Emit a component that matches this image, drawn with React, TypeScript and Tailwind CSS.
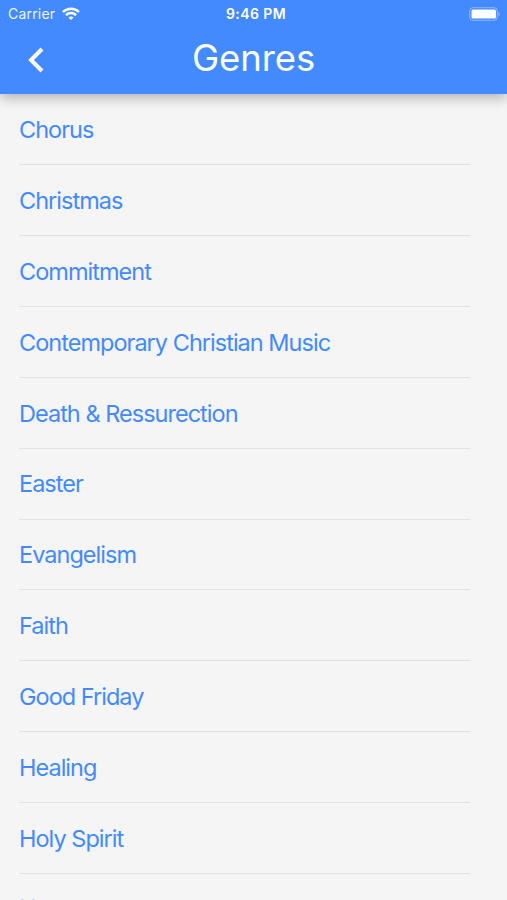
const genres = [
  'Chorus',
  'Christmas',
  'Commitment',
  'Contemporary Christian Music',
  'Death & Ressurection',
  'Easter',
  'Evangelism',
  'Faith',
  'Good Friday',
  'Healing',
  'Holy Spirit',
  'Hope',
];

function WifiIcon() {
  return (
    <svg width="18" height="13" viewBox="0 0 18 13" fill="none" stroke="currentColor" strokeWidth="2.4">
      <path d="M1 5C5.5 0.6 12.5 0.6 17 5" />
      <path d="M3.9 8.1C6.8 5.3 11.2 5.3 14.1 8.1" />
      <path d="M9 13L6.4 10.4C8 9.2 10 9.2 11.6 10.4Z" fill="currentColor" stroke="none" />
    </svg>
  );
}

function BatteryIcon() {
  return (
    <svg width="31" height="14" viewBox="0 0 31 14" fill="none">
      <rect x="0.7" y="0.7" width="27.6" height="12.6" rx="3.3" stroke="white" strokeOpacity="0.4" />
      <rect x="2.5" y="2.5" width="24.5" height="9" rx="1.5" fill="white" />
      <path d="M29.5 5C31 5.7 31 8.3 29.5 9Z" fill="white" fillOpacity="0.5" />
    </svg>
  );
}

export default function App() {
  return (
    <div className="flex h-[900px] w-full flex-col overflow-hidden bg-[#f5f5f5] font-['Inter',sans-serif]">
      <header className="z-10 h-[94px] shrink-0 bg-[#448aff] text-white shadow-[0_4px_12px_rgba(0,0,0,0.28)]">
        {/* Status bar */}
        <div className="grid h-7 grid-cols-3 items-center pb-px text-[14px]">
          <div className="flex items-center gap-[7px] pl-2">
            <span className="w-[47px] tracking-[0.2px] text-white/90">Carrier</span>
            <WifiIcon />
          </div>
          <span className="pl-[5px] text-center font-semibold tracking-[0.4px]">9:46 PM</span>
          <div className="flex justify-end pr-[7px]">
            <BatteryIcon />
          </div>
        </div>

        {/* Title bar */}
        <div className="grid h-[62px] grid-cols-[72px_1fr_72px] items-center">
          <button className="flex justify-center pt-px pr-px" aria-label="Back">
            <svg width="18" height="26" viewBox="0 0 18 26" fill="none" stroke="currentColor" strokeWidth="4">
              <path d="M15 2L4 13L15 24" />
            </svg>
          </button>
          <h1 className="pb-0.5 text-center text-[36.5px] leading-none tracking-[-0.1px]">Genres</h1>
        </div>
      </header>

      <ul className="pt-[0.2px] pr-[37px] pl-[19px]">
        {genres.map((genre) => (
          <li
            key={genre}
            className="flex h-[70.9px] items-center border-b border-[#e2e2e2] pt-px text-[23.5px] tracking-[-0.98px] text-[#448aff] last:pt-0 last:pb-[3px] last:text-[#448aff]/40"
          >
            {genre}
          </li>
        ))}
      </ul>
    </div>
  );
}
